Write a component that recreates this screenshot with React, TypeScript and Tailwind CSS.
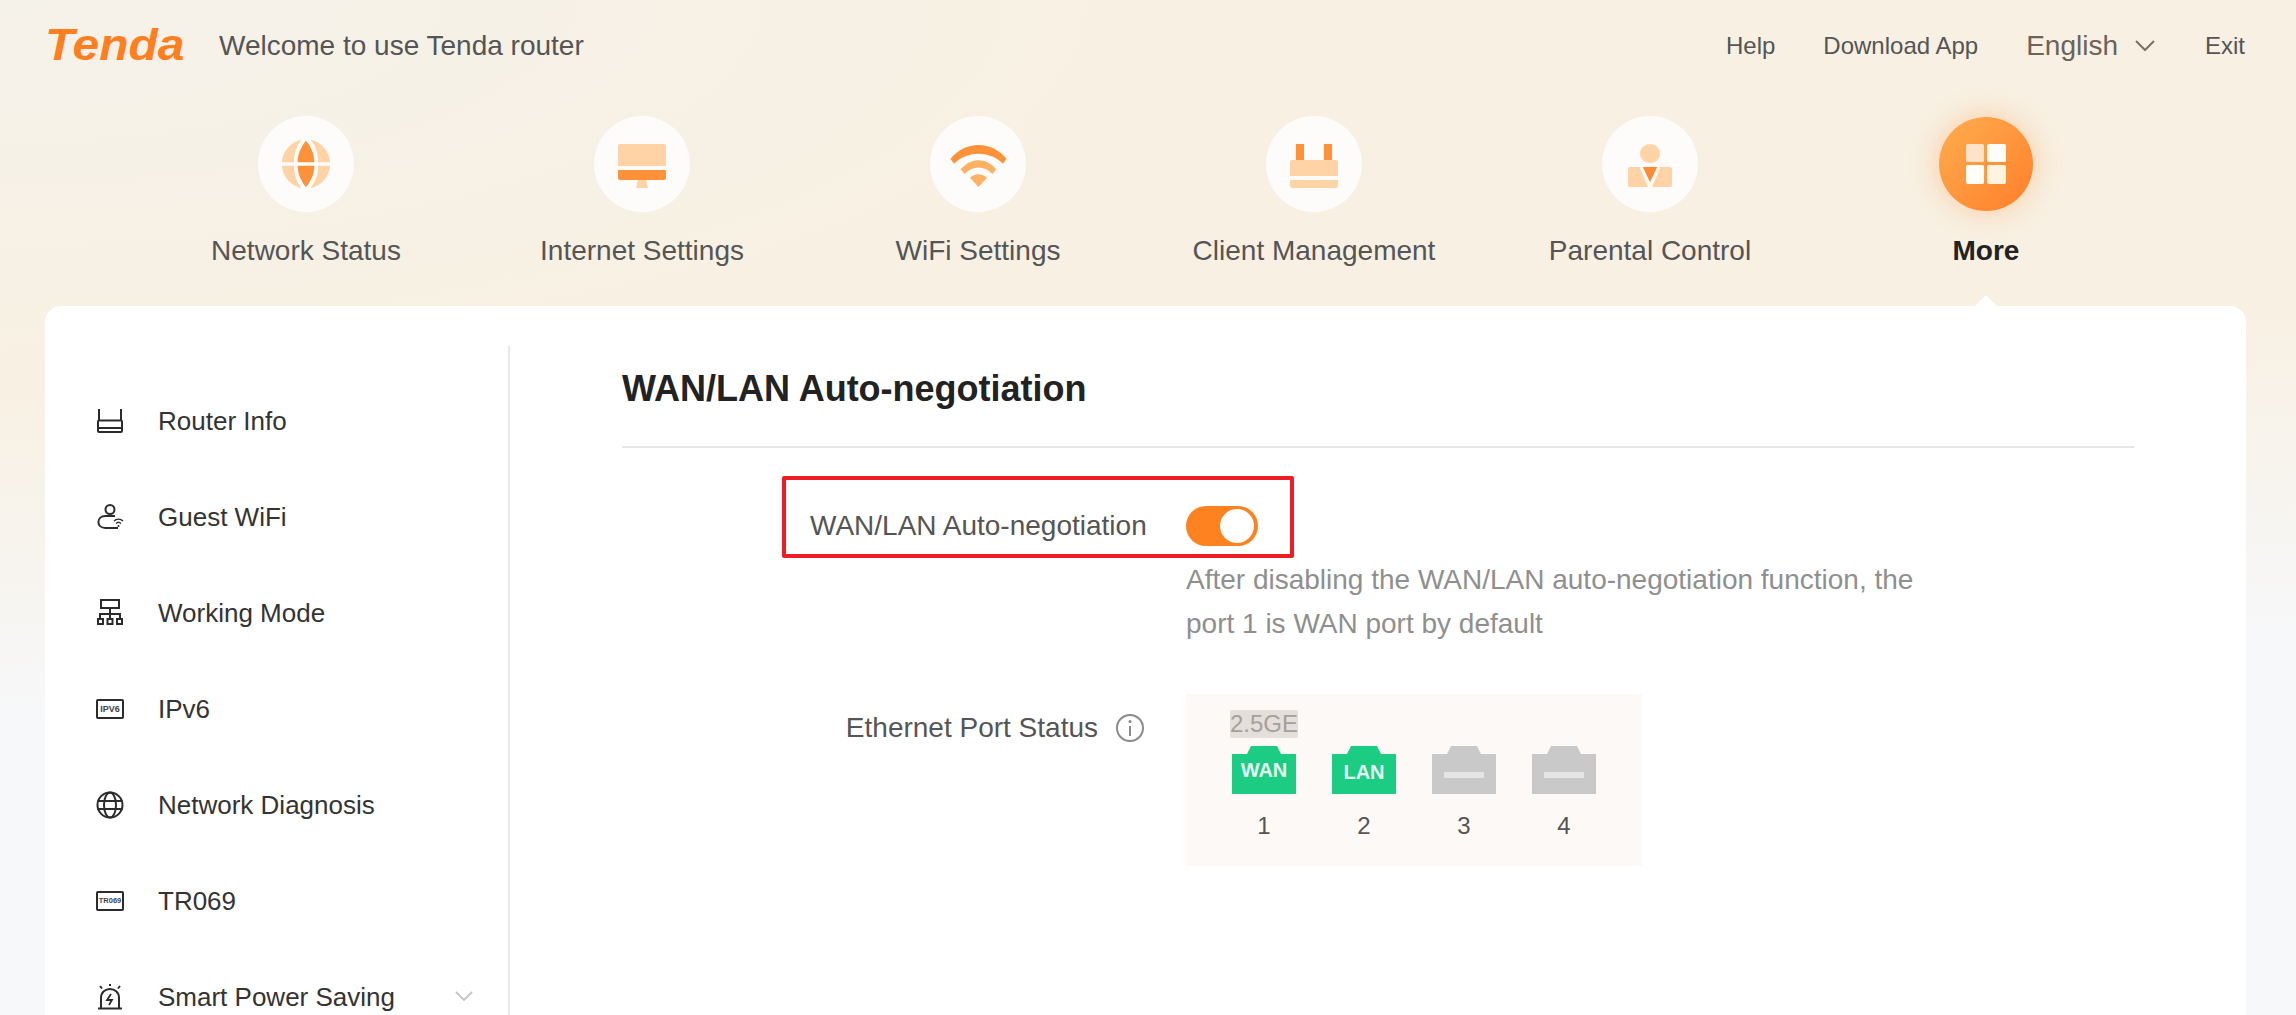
const F = "font-['Liberation_Sans',Arial,sans-serif]";

function Circle({ children }: { children: React.ReactNode }) {
  return <div className="w-[96px] h-[96px] rounded-full bg-[#fdfcfa] flex items-center justify-center">{children}</div>;
}

const L = "#ffd3a6";
const D = "#ff9138";

const GlobeBig = (
  <svg width="52" height="52" viewBox="0 0 56 56">
    <path d="M23 2 C13 4 3 13 2 26 H15 C15 16 18 8 23 2Z M33 2 C43 4 53 13 54 26 H41 C41 16 38 8 33 2Z M2 30 H15 C15 40 18 48 23 54 C13 52 3 43 2 30Z M54 30 H41 C41 40 38 48 33 54 C43 52 53 43 54 30Z" fill={L} />
    <path d="M28 3 C23 9 19 17 19 26 H37 C37 17 33 9 28 3Z M19 30 H37 C37 39 33 47 28 53 C23 47 19 39 19 30Z" fill={D} />
  </svg>
);
const Monitor = (
  <svg className="mt-[3px]" width="48" height="44" viewBox="0 0 48 44">
    <path d="M2 0 H46 Q48 0 48 2 V22 H0 V2 Q0 0 2 0Z" fill={L} />
    <path d="M0 26 H48 V34 Q48 36 46 36 H2 Q0 36 0 34Z" fill={D} />
    <path d="M20 36 H28 L30 44 H18Z" fill={L} />
  </svg>
);
const Wifi = (
  <svg className="mt-[2px]" width="57" height="43" viewBox="0 0 60 46">
    <path d="M0 16 C15 -4 45 -4 60 16 L56 21 C42 7 18 7 4 21Z" fill={D} />
    <path d="M11 27 C22 14 38 14 49 27 L45 32 C35 23 25 23 15 32Z" fill="#ffb163" />
    <path d="M21 36 C26 31 34 31 39 36 L30 46Z" fill="#ffb163" />
  </svg>
);
const RouterBig = (
  <svg className="mt-[3px]" width="48" height="44" viewBox="0 0 48 44">
    <rect x="6" y="0" width="8" height="17" fill={D} />
    <rect x="34" y="0" width="8" height="17" fill={D} />
    <path d="M2 16 H46 Q48 16 48 18 V32 H0 V18 Q0 16 2 16Z" fill={L} />
    <path d="M0 36 H48 V42 Q48 44 46 44 H2 Q0 44 0 42Z" fill={L} />
  </svg>
);
const Person = (
  <svg className="mt-[3px]" width="44" height="44" viewBox="0 0 46 46">
    <ellipse cx="23" cy="10" rx="10.5" ry="10" fill={L} />
    <path d="M2 24 H12 L21 45 H2 Q0 45 0 43 V26 Q0 24 2 24Z M44 24 H34 L25 45 H44 Q46 45 46 43 V26 Q46 24 44 24Z" fill={L} />
    <path d="M15.5 24 H30.5 L23 40Z" fill="#ff8a33" />
  </svg>
);
const Grid4 = (
  <svg width="40" height="40" viewBox="0 0 42 42">
    <rect x="0" y="0" width="19" height="19" rx="2" fill="#ffe3c6" />
    <rect x="22" y="0" width="20" height="19" rx="2" fill="#fffdf8" />
    <rect x="0" y="22" width="19" height="20" rx="2" fill="#fffdf8" />
    <rect x="22" y="22" width="20" height="20" rx="2" fill="#fff4df" />
  </svg>
);

const nav = [
  { label: "Network Status", icon: GlobeBig },
  { label: "Internet Settings", icon: Monitor },
  { label: "WiFi Settings", icon: Wifi },
  { label: "Client Management", icon: RouterBig },
  { label: "Parental Control", icon: Person },
];

const st = { fill: "none", stroke: "#2b2b2b", strokeWidth: 2 } as const;
const menu: { label: string; icon: React.ReactNode; chev?: boolean }[] = [
  {
    label: "Router Info",
    icon: (
      <svg width="28" height="28" viewBox="0 0 28 28" {...st}>
        <path d="M3 2 V14 M25 2 V14" />
        <rect x="2" y="13.5" width="24" height="11.5" rx="1" />
        <path d="M2 21 H26" />
      </svg>
    ),
  },
  {
    label: "Guest WiFi",
    icon: (
      <svg width="28" height="28" viewBox="0 0 28 28" {...st}>
        <circle cx="14" cy="6.5" r="4.5" />
        <path d="M19 13 H9.5 C0 13 0 25 9.5 25 H22" />
        <path d="M18 18 C20.5 15.5 24.5 15.5 27 18 M20 20.5 C21.5 19 23.5 19 25 20.5" strokeWidth="1.4" />
        <circle cx="22.5" cy="23" r="1" fill="#2b2b2b" stroke="none" />
      </svg>
    ),
  },
  {
    label: "Working Mode",
    icon: (
      <svg width="28" height="28" viewBox="0 0 28 28" {...st}>
        <rect x="5" y="1" width="18" height="8" />
        <path d="M14 9 V20 M4 20 V15 H24 V20" />
        <rect x="2" y="20" width="5" height="5" />
        <rect x="11.5" y="20" width="5" height="5" />
        <rect x="21" y="20" width="5" height="5" />
      </svg>
    ),
  },
  {
    label: "IPv6",
    icon: (
      <div className="w-[28px] h-[20px] rounded-[2px] border-2 border-[#2b2b2b] flex items-center justify-center text-[9px] font-bold text-[#444] leading-none">IPV6</div>
    ),
  },
  {
    label: "Network Diagnosis",
    icon: (
      <svg width="28" height="28" viewBox="0 0 28 28" {...st}>
        <circle cx="14" cy="14" r="12.5" />
        <ellipse cx="14" cy="14" rx="6" ry="12.5" />
        <path d="M1.5 10 H26.5 M1.5 18 H26.5" />
      </svg>
    ),
  },
  {
    label: "TR069",
    icon: (
      <div className="w-[28px] h-[20px] rounded-[2px] border-2 border-[#2b2b2b] flex items-center justify-center text-[7.5px] font-bold text-[#444] leading-none">TR069</div>
    ),
  },
  {
    label: "Smart Power Saving",
    chev: true,
    icon: (
      <svg width="28" height="28" viewBox="0 0 28 28" {...st}>
        <path d="M5 25 V15 C5 3 23 3 23 15 V25 M2 25.5 H26" />
        <path d="M14 1 V3 M4 3 L6 5.5 M24 3 L22 5.5" />
        <path d="M15 11 L11 17 H16 L13 22" strokeWidth="1.8" />
      </svg>
    ),
  },
];

function Port({ text, on, num, low }: { text?: string; on?: boolean; num: number; low?: boolean }) {
  return (
    <div className="w-[64px] flex flex-col items-center">
      <div className="relative w-[64px] h-[48px]">
        <svg width="64" height="48" viewBox="0 0 64 48" className="absolute inset-0">
          <path d="M0 8 H15 L19 0 H45 L49 8 H64 V48 H0Z" fill={on ? "#1bcc82" : "#c9c9c9"} />
        </svg>
        {on ? (
          <span className={`absolute inset-x-0 text-center text-[20px] font-bold leading-[24px] text-[#e6faf1] ${low ? "top-[14px]" : "top-[12px]"}`}>{text}</span>
        ) : (
          <span className="absolute left-[12px] top-[26px] w-[40px] h-[6px] bg-[#e4e4e4]" />
        )}
      </div>
      <div className="mt-[18px] text-[24px] leading-[28px] text-[#555]">{num}</div>
    </div>
  );
}

export default function App() {
  return (
    <div className={`${F} relative h-[1015px] w-[2296px] overflow-hidden bg-[radial-gradient(ellipse_1300px_420px_at_0_0,#f5f2ea_0%,rgba(245,242,234,0)_100%),linear-gradient(178deg,#f8f0e2_35%,#f7f8fa_66%)]`}>
      <header className="h-[92px] pl-[45px] pr-[51px] flex items-center">
        <span className="w-[142px] origin-left scale-x-[1.09] text-[44px] leading-none italic font-bold text-[#ff7f1f] -mt-[3px]">Tenda</span>
        <span className="ml-[32px] text-[28px] text-[#555]">Welcome to use Tenda router</span>
        <div className="ml-auto flex items-center text-[24px] text-[#555]">
          <span>Help</span>
          <span className="ml-[48px]">Download App</span>
          <span className="ml-[48px] text-[28px] text-[#6b6359]">English</span>
          <svg className="ml-[16px]" width="22" height="14" viewBox="0 0 22 14" fill="none" stroke="#7a7268" strokeWidth="2"><path d="M2 2 L11 11 L20 2" /></svg>
          <span className="ml-[49px]">Exit</span>
        </div>
      </header>

      <nav className="pl-[138px] flex h-[214px]">
        {nav.map((n) => (
          <div key={n.label} className="w-[336px] flex flex-col items-center pt-[24px]">
            <Circle>{n.icon}</Circle>
            <div className="mt-[23px] text-[28px] leading-[32px] text-[#555]">{n.label}</div>
          </div>
        ))}
        <div className="relative w-[336px] flex flex-col items-center pt-[24px]">
          <div className="w-[94px] h-[94px] mt-[1px] rounded-full bg-[linear-gradient(135deg,#ffad4f,#ff7f2a)] shadow-[0_0_28px_rgba(255,145,60,0.4)] flex items-center justify-center">{Grid4}</div>
          <div className="mt-[24px] text-[28px] leading-[32px] font-bold text-[#222]">More</div>
          <span className="absolute left-[157px] bottom-0 w-0 h-0 border-x-[11px] border-x-transparent border-b-[11px] border-b-white" />
        </div>
      </nav>

      <main className="mx-[45px] w-[2201px] h-[900px] bg-white rounded-t-[16px] flex">
        <aside className="w-[465px] mt-[40px] border-r-2 border-[#e8e8e8] pt-[27px]">
          {menu.map((m) => (
            <div key={m.label} className="h-[96px] flex items-center text-[26px] text-[#333] relative">
              <span className="ml-[51px] w-[28px] flex justify-center">{m.icon}</span>
              <span className="ml-[34px]">{m.label}</span>
              {m.chev && (
                <svg className="absolute left-[410px] top-[42px]" width="18" height="10" viewBox="0 0 18 10" fill="none" stroke="#c8c8c8" strokeWidth="2"><path d="M1 1 L9 9 L17 1" /></svg>
              )}
            </div>
          ))}
        </aside>
        <section className="ml-[112px] w-[1512px]">
          <h1 className="pt-[58px] h-[142px] border-b-2 border-[#e5e5e5] text-[36px] font-bold leading-[50px] text-[#222]">WAN/LAN Auto-negotiation</h1>

          <div className="relative mt-[28px] flex h-[82px] pl-[188px] items-center">
            <span className="absolute left-[160px] top-0 w-[512px] h-[82px] border-4 border-[#ee1c25] rounded-[2px]" />
            <span className="w-[376px] text-[28px] text-[#555] pt-[17px]">WAN/LAN Auto-negotiation</span>
            <span className="relative mt-[17px] w-[72px] h-[40px] rounded-full bg-[#ff8220]">
              <span className="absolute right-[4px] top-[3px] w-[34px] h-[34px] rounded-full bg-white" />
            </span>
          </div>

          <div className="ml-[564px] w-[760px] text-[28px] leading-[44px] text-[#8f8f8f]">
            After disabling the WAN/LAN auto-negotiation function, the port 1 is WAN port by default
          </div>

          <div className="mt-[48px] flex">
            <div className="w-[564px] pr-[42px] flex justify-end items-center h-[68px] text-[28px] text-[#555]">
              <span>Ethernet Port Status</span>
              <svg className="ml-[18px]" width="28" height="28" viewBox="0 0 28 28" fill="none" stroke="#8a8a8a" strokeWidth="2">
                <circle cx="14" cy="14" r="13" />
                <path d="M14 12 V22" />
                <circle cx="14" cy="7.5" r="1.5" fill="#8a8a8a" stroke="none" />
              </svg>
            </div>
            <div className="w-[456px] h-[172px] bg-[#fdf9f6] pl-[46px] pt-[16px]">
              <div className="h-[28px] w-[68px] -ml-[2px] bg-[#e4dfda] rounded-[2px] text-[24px] leading-[28px] text-[#a5a09b]">2.5GE</div>
              <div className="mt-[8px] flex gap-[36px]">
                <Port text="WAN" on num={1} />
                <Port text="LAN" on low num={2} />
                <Port num={3} />
                <Port num={4} />
              </div>
            </div>
          </div>
        </section>
      </main>
    </div>
  );
}
